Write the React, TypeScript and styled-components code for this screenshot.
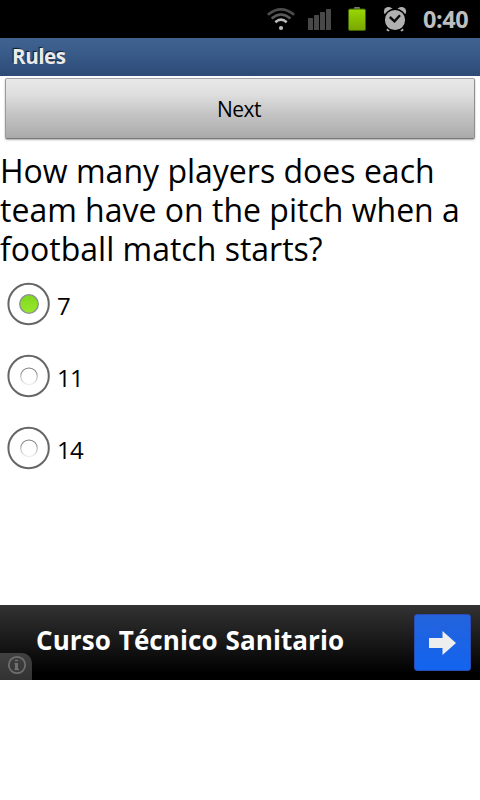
import React, { useState } from "react";
import styled, { createGlobalStyle } from "styled-components";

const Global = createGlobalStyle`
  * { box-sizing: border-box; }
  body { margin: 0; background: #fff; font-family: "Open Sans", "Noto Sans", sans-serif; }
`;

const Screen = styled.div`
  width: 480px;
  height: 800px;
  display: flex;
  flex-direction: column;
  overflow: hidden;
  background: #fff;
  color: #000;
`;

const StatusBar = styled.header`
  height: 38px;
  flex: none;
  display: flex;
  align-items: flex-start;
  background: #000;
  padding-left: 262px;
`;

const Clock = styled.time`
  margin-left: 13px;
  line-height: 39px;
  font-size: 23.5px;
  font-weight: 700;
  letter-spacing: -0.4px;
  color: #bebebe;
`;

const TitleBar = styled.div`
  height: 38px;
  flex: none;
  padding-left: 12px;
  line-height: 37px;
  font-size: 20.5px;
  font-weight: 700;
  letter-spacing: -0.4px;
  color: #ebebeb;
  text-shadow: -1px -1px 1px #101a28;
  background: linear-gradient(#3f6391, #385a88 45%, #2c4b76);
`;

const NextButton = styled.button`
  display: block;
  flex: none;
  height: 61px;
  margin: 2px 5px 0;
  padding: 1px 2px 0 0;
  border: 1px solid #999;
  border-color: #a3a3a3 #8f8f8f #777 #999;
  border-radius: 2px;
  background: linear-gradient(#e8e8e8, #dfdfdf 25%, #c4c4c4 60%, #aaa);
  box-shadow: 0 1px 2px #aaa;
  font: 21px "Open Sans", sans-serif;
  letter-spacing: -0.5px;
  color: #000;
`;

const Question = styled.div`
  margin-top: 12px;
  height: 118px;
  flex: none;
`;

const Line = styled.div`
  width: max-content;
  height: 39px;
  line-height: 39px;
  font-size: 33px;
  white-space: nowrap;
  transform: scaleX(0.97);
  transform-origin: left;
`;

const Options = styled.div`
  margin-top: -1px;
  display: flex;
  flex-direction: column;
`;

const Option = styled.button`
  height: 72px;
  display: flex;
  padding: 0 0 0 7px;
  border: 0;
  background: none;
  font: 24px "Open Sans", sans-serif;
  color: #000;
  align-items: center;
`;

const OptionText = styled.span`
  margin: 3px 0 0 6px;
  letter-spacing: -0.6px;
`;

const Spacer = styled.div`
  flex: 1;
`;

const Ad = styled.div`
  position: relative;
  height: 75px;
  flex: none;
  margin-bottom: 120px;
  display: flex;
  align-items: center;
  justify-content: space-between;
  padding: 0 9px 0 36px;
  background: linear-gradient(#333, #000 92%);
`;

const AdText = styled.strong`
  margin-top: -5px;
  font-size: 26px;
  line-height: 36px;
  font-weight: 700;
  white-space: nowrap;
  letter-spacing: 0.1px;
  word-spacing: 0.9px;
  color: #fff;
`;

const AdArrow = styled.span`
  width: 57px;
  height: 57px;
  border: 1px solid #2a4cb4;
  border-radius: 3px;
  background: linear-gradient(#2463dc, #1264ef);
  display: flex;
`;

const InfoBadge = styled.span`
  position: absolute;
  left: 0;
  bottom: 0;
  width: 32px;
  height: 27px;
  border-top-right-radius: 10px;
  background: linear-gradient(#414141, #323232);
  display: flex;
`;

function StatusIcons() {
  return (
    <svg width="148" height="38" viewBox="262 0 148 38" fill="none">
      <defs>
        <linearGradient id="charge" x1="0" y1="0" x2="0" y2="1">
          <stop offset="0" stopColor="#98d800" />
          <stop offset="1" stopColor="#78a600" />
        </linearGradient>
      </defs>
      <g strokeWidth="2.6">
        <path d="M267.8 14.8Q281 3.800 294.200 14.800" stroke="#4c4c4c" />
        <path d="M271.600 18.500Q281 10.500 290.400 18.500" stroke="#5a5a5a" />
        <path d="M275.300 22.200Q281 17.200 286.700 22.200" stroke="#bababa" />
      </g>
      <circle cx="281" cy="28" r="2.1" fill="#bababa" />
      <g fill="#484848">
        <rect x="308" y="18" width="5" height="12" rx="0.5" />
        <rect x="314" y="15" width="5" height="15" rx="0.5" />
        <rect x="320" y="12" width="5" height="18" rx="0.5" />
        <rect x="326" y="9" width="5" height="21" rx="0.5" />
      </g>
      <rect x="354" y="7" width="6" height="3" rx="1" fill="#777" />
      <rect x="348.500" y="9" width="17" height="21.500" rx="1.500" fill="url(#charge)" stroke="#3f6200" />
      <g fill="#b0b0b0">
        <circle cx="388.500" cy="11.500" r="4.600" />
        <circle cx="401.500" cy="11.500" r="4.600" />
        <path d="M387.500 26L391 29L388.500 31.500L386.500 30.500ZM402.500 26L399 29L401.500 31.500L403.500 30.500Z" />
        <circle cx="395" cy="20" r="10.800" stroke="#000" strokeWidth="1.400" />
      </g>
      <path d="M389.800 17L394.500 21.300L400 15.300" stroke="#080808" strokeWidth="2.400" />
    </svg>
  );
}

function RadioMark({ checked }: { checked: boolean }) {
  return (
    <svg width="44" height="44" viewBox="0 0 44 44" fill="none">
      <defs>
        <linearGradient id="hole" x1="0" y1="0" x2="0" y2="1">
          <stop offset="0" stopColor="#777" />
          <stop offset="0.5" stopColor="#bbb" />
          <stop offset="1" stopColor="#eee" />
        </linearGradient>
        <linearGradient id="lit" x1="0" y1="0" x2="0" y2="1">
          <stop offset="0" stopColor="#80d81e" />
          <stop offset="1" stopColor="#98e72c" />
        </linearGradient>
      </defs>
      <circle cx="21.600" cy="22" r="20.200" stroke="#666" strokeWidth="2" />
      {checked ? (
        <circle cx="22" cy="22" r="9.300" fill="url(#lit)" stroke="#8b8e96" strokeWidth="1.300" />
      ) : (
        <circle cx="22" cy="22.300" r="8.300" stroke="url(#hole)" strokeWidth="1.200" />
      )}
    </svg>
  );
}

const lines = ["How many players does each", "team have on the pitch when a", "football match starts?"];
const answers = ["7", "11", "14"];

export default function App() {
  const [selected, setSelected] = useState("7");
  return (
    <Screen>
      <Global />
      <StatusBar>
        <StatusIcons />
        <Clock>0:40</Clock>
      </StatusBar>
      <TitleBar>Rules</TitleBar>
      <NextButton>Next</NextButton>
      <Question>
        {lines.map((line) => (
          <Line key={line}>{line}</Line>
        ))}
      </Question>
      <Options role="radiogroup">
        {answers.map((a) => (
          <Option key={a} role="radio" aria-checked={a === selected} onClick={() => setSelected(a)}>
            <RadioMark checked={a === selected} />
            <OptionText>{a}</OptionText>
          </Option>
        ))}
      </Options>
      <Spacer />
      <Ad>
        <AdText>Curso Técnico Sanitario</AdText>
        <AdArrow>
          <svg width="55" height="55" viewBox="0 0 55 55">
            <path d="M14 23H27.500V16L41 28L27.500 40V33H14Z" fill="#eee" />
          </svg>
        </AdArrow>
        <InfoBadge>
          <svg width="32" height="27" viewBox="0 0 32 27" fill="none" stroke="#707070">
            <circle cx="17" cy="12" r="8.200" strokeWidth="1.700" />
            <path d="M16.500 10V17" strokeWidth="3" />
            <path d="M14.500 10.700H17M14.500 16.500H19M15 7.500H18" strokeWidth="1.600" />
          </svg>
        </InfoBadge>
      </Ad>
    </Screen>
  );
}
